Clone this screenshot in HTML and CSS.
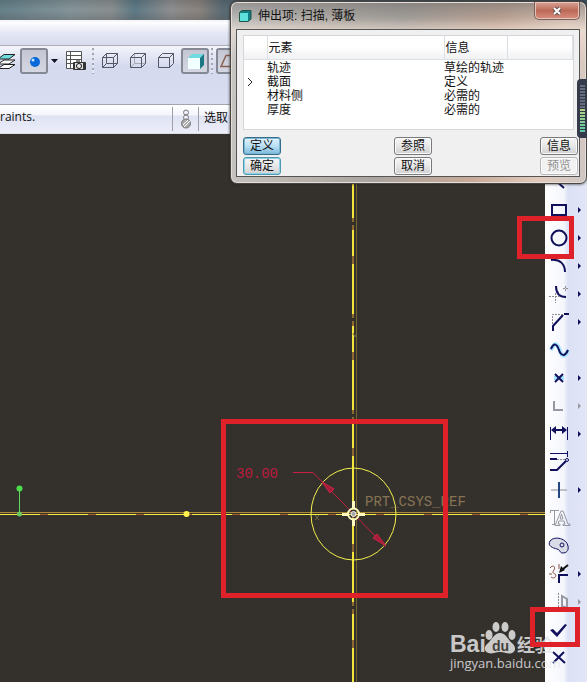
FILE: index.html
```html
<!DOCTYPE html>
<html lang="zh-CN">
<head>
<meta charset="utf-8">
<title>伸出项: 扫描, 薄板</title>
<link rel="stylesheet" href="styles.css">
</head>
<body>
<div class="app">
  <div class="window-glass"></div>
  <div class="menu-strip"></div>
  <div class="toolbar">
    <button class="tool layers" aria-label="图层"><svg width="16" height="16" viewBox="0 0 16 16"><g stroke="#222" fill="#fff"><path d="M-2 15.500L4 11.500H15L9 15.500Z"/><path d="M-2 11L4 7H15L9 11Z"/><path d="M-2 6L4 1.500H15L9 6Z" fill="#6fdde0"/></g></svg></button>
    <button class="tool pressed" aria-label="着色"><svg width="24" height="22" viewBox="2 3 24 22"><circle cx="15" cy="15" r="5" fill="#0868d8"/><circle cx="13" cy="13" r="1.500" fill="#bfe5ff"/></svg></button>
    <button class="drop" aria-label="更多"><svg width="8" height="4"><path d="M0 0H7L3.500 4Z" fill="#112"/></svg></button>
    <button class="tool snapshot" aria-label="视图管理器"><svg width="22" height="22"><path d="M1.500 1.500H16.500V18.500H1.500ZM5.500 2V18M2 5.500H16M2 9.500H16M2 13.500H16" fill="#fff" stroke="#555"/><rect x="8" y="12" width="13" height="8" rx="1" fill="#333"/><rect x="10" y="13" width="8" height="6" fill="#ddd"/><circle cx="14" cy="16" r="2.500" fill="#eee" stroke="#111"/><path d="M11 11h4" stroke="#111"/></svg></button>
    <span class="grip"></span>
    <button class="tool wire" aria-label="线框"><svg width="18" height="18"><path d="M1.500 5.500H12.500V15.500H1.500ZM1.500 5.500L5.500 1.500H16.500L12.500 5.500M16.500 1.500V11.500L12.500 15.500M5.500 1.500V11.500H16.500M5.500 11.500L1.500 15.500" fill="none" stroke="#555866"/></svg></button>
    <button class="tool wire" aria-label="隐藏线"><svg width="18" height="18"><path d="M5.500 1.500V11.500H16.500M5.500 11.500L1.500 15.500" fill="none" stroke="#a6a8b2"/><path d="M1.500 5.500H12.500V15.500H1.500ZM1.500 5.500L5.500 1.500H16.500L12.500 5.500M16.500 1.500V11.500L12.500 15.500" fill="none" stroke="#555866"/></svg></button>
    <button class="tool wire" aria-label="无隐藏线"><svg width="18" height="18"><path d="M1.500 5.500H12.500V15.500H1.500ZM1.500 5.500L5.500 1.500H16.500L12.500 5.500M16.500 1.500V11.500L12.500 15.500" fill="none" stroke="#555866"/></svg></button>
    <button class="tool pressed" aria-label="实体"><svg width="24" height="22" viewBox="1 2 24 22"><path d="M6 10L10 6H22L18 10Z" fill="#6fdbe0"/><path d="M18 10L22 6V17L18 21Z" fill="#1b7782"/><path d="M6 10H18V21H6Z" fill="#f2ffff"/></svg></button>
    <span class="grip"></span>
    <button class="tool pressed" aria-label="基准平面"><svg width="24" height="22" viewBox="2 2 24 22"><path d="M5 18.500L10 7.500H22L17 18.500Z" fill="none" stroke="#8b5f50" stroke-width="1.500"/></svg></button>
  </div>
  <div class="message-bar">
    <span class="message">raints.</span>
    <span class="signal"><svg width="12" height="20"><g stroke="#777" fill="#eef"><circle cx="6" cy="3.500" r="2.500"/><circle cx="6" cy="8.500" r="2.500"/><circle cx="6" cy="14.500" r="4.500" fill="#aaa"/></g><path d="M3 16l5-5M4 18l6-6" stroke="#fff"/></svg></span>
    <span class="pick">选取</span>
  </div>
  <main class="workspace">
    <svg class="canvas" role="img" aria-label="草绘">
      <g fill="none">
        <path d="M356.500 0V900" stroke="#756330"/>
        <path d="M353 0V900" stroke="#8f6a30" stroke-width="2"/>
        <path d="M353 0V900" stroke="#f4e53d" stroke-width="2" stroke-dasharray="26 8 50 12"/>
        <path d="M353 0V900" stroke="#34312d" stroke-width="2" stroke-dasharray="3 93" stroke-dashoffset="-88"/>
        <path d="M0 378.500H1600" stroke="#ad8b35"/>
        <path d="M0 380.500H1600" stroke="#f4ef45"/>
        <path d="M0 380.500H1600" stroke="#a95f2d" stroke-dasharray="8 40" stroke-dashoffset="-40"/>
        <ellipse cx="353.500" cy="380" rx="42.500" ry="46" stroke="#f2ef4e"/>
        <path d="M293 338.500H313L385 412" stroke="#c81f45"/>
      </g>
      <path d="M322 348L334 355L330 359ZM386 412L373 404L377 400Z" fill="#a51d3a" stroke="#d02346"/>
      <g fill="none" stroke="#fffbc1" stroke-width="3"><path d="M342 380.500H348M359 380.500H365M353.500 367V374M353.500 386V392"/><circle cx="353.500" cy="380" r="5.500" stroke-width="2"/></g>
      <circle cx="353.500" cy="380" r="2.500" fill="#a5a5a5" stroke="#eee"/>
      <path d="M315 386l4-5M315 381l4 5M353 199l2 4 2-4" stroke="#756b42" fill="none"/>
      <path d="M19.500 354V380" stroke="#62d95f"/><circle cx="19.500" cy="354.500" r="3" fill="#4bdd4c"/><circle cx="19.500" cy="380" r="2.500" fill="#69c961"/><circle cx="186.500" cy="380" r="3" fill="#fff24c"/>
      <text class="dim" x="236" y="344">30.00</text>
      <text class="csys" x="365" y="372">PRT_CSYS_REF</text>
    </svg>
    <nav class="sketch-tools" aria-label="草绘工具">
      <div class="row"><button aria-label="直线"><svg width="24" height="24"><path d="M7 9L17 18"/></svg></button></div>
      <div class="row"><button aria-label="矩形"><svg width="24" height="24"><path d="M5 7H19V17H5Z"/></svg></button><button class="more" aria-label="更多矩形"></button></div>
      <div class="row"><button aria-label="圆"><svg width="24" height="24"><circle cx="12" cy="12" r="7.500"/></svg></button><button class="more" aria-label="更多圆"></button></div>
      <div class="row"><button aria-label="弧"><svg width="24" height="24"><path d="M4 6C13 5 18 10 18 18"/></svg></button><button class="more" aria-label="更多弧"></button></div>
      <div class="row"><button aria-label="圆角"><svg width="24" height="24"><path d="M9 4C9 11 12 15 19 15"/><path class="aux" d="M2 14.500H14M8.500 11V21M16 6.500H22M18.500 4V9"/></svg></button><button class="more" aria-label="更多圆角"></button></div>
      <div class="row"><button aria-label="倒角"><svg width="24" height="24"><path d="M6 21V16L16 5M17 4H22"/><path class="aux" d="M5.500 14V4.500H17"/></svg></button><button class="more" aria-label="更多倒角"></button></div>
      <div class="row"><button aria-label="样条"><svg width="24" height="24"><path class="glow" d="M4 12C8 2 11 7 13 13S18 20 21 12"/><path d="M4 11C7 4 10 6 12 12S18 19 21 12"/></svg></button></div>
      <div class="row"><button aria-label="点"><svg width="24" height="24"><path class="glow" d="M7 12H17"/><path d="M8 8L16 16M16 8L8 16"/></svg></button><button class="more" aria-label="更多点"></button></div>
      <div class="row off"><button aria-label="使用边"><svg width="24" height="24"><path d="M7 7V16H16"/></svg></button><button class="more" aria-label="更多边"></button></div>
      <div class="row"><button aria-label="尺寸"><svg width="24" height="24"><path class="thin" d="M3.500 5V18M20.500 5V18"/><path d="M5 8H19"/><path class="solid" d="M4 8L9 4V12ZM20 8L15 4V12Z"/></svg></button><button class="more" aria-label="更多尺寸"></button></div>
      <div class="row"><button aria-label="修改"><svg width="24" height="24"><path class="thin" d="M3 3.500H20M20.500 1V7"/><path d="M3 9H10M3 20H10L19 11"/><path class="aux" d="M10 9.500H18"/><circle class="thin" cx="20" cy="10" r="1.500"/></svg></button></div>
      <div class="row"><button aria-label="约束"><svg width="24" height="24"><path class="aux line" d="M4 12H20"/><path class="steel" d="M12 4V20"/></svg></button><button class="more" aria-label="更多约束"></button></div>
      <div class="row off"><button aria-label="文本"><svg width="24" height="24"><path class="thin" d="M3 4.500H12M3.500 4V7M7.500 5V18M5 18.500H8M8 19.500L14 5H16L21 18H23V19.500H16V18H18L17 15H12L11 18H13V19.500H8M13 13H16L14.500 8Z"/></svg></button></div>
      <div class="row"><button aria-label="调色板"><svg width="24" height="24"><path class="palette" d="M3 7C8 1 20 5 21 12C22 17 19 19 16 19C12 19 14 16 10 15C6 14 0 12 3 7Z"/><circle class="thin" cx="15" cy="11" r="2"/></svg></button></div>
      <div class="row"><button aria-label="修剪"><svg width="24" height="24"><path d="M12 21V13H21"/><path class="black" d="M16 7L21 3"/><path class="ink" d="M12 11L14 4L18 8Z"/><path class="brown" d="M3 6C6 2 9 5 7 8S6 11 8 12S8 18 4 15M12 2V7M2 12H5"/></svg></button><button class="more" aria-label="更多修剪"></button></div>
      <div class="row off"><button aria-label="镜像"><svg width="24" height="24"><path class="aux" d="M11.500 3V21"/><path d="M15 6L20 9V18L15 16Z"/></svg></button><button class="more" aria-label="更多镜像"></button></div>
      <div class="row"><button aria-label="完成"><svg width="24" height="24"><path class="solid" d="M3 12L6 11L10 15L18 6L20 7L10 19Z"/></svg></button></div>
      <div class="row"><button aria-label="退出"><svg width="24" height="24"><path d="M6 6L18 17M17 6L6 17"/></svg></button></div>
    </nav>
    <svg class="watermark" width="132" height="60">
      <g fill="#e6e6e6" fill-opacity=".85"><text class="wm-brand" x="4" y="35">Bai</text><path d="M54 16C60 16 62 23 67 27C72 33 67 38 60 36Q54 34 48 36C40 38 36 32 41 27C46 23 48 16 54 16Z"/><ellipse cx="43" cy="18" rx="3.500" ry="5"/><ellipse cx="50" cy="10" rx="3.500" ry="5"/><ellipse cx="59" cy="10" rx="3.500" ry="5"/><ellipse cx="66" cy="18" rx="3.500" ry="5"/><text class="wm-cn" x="71" y="35">经验</text><text class="wm-url" x="4" y="51">jingyan.baidu.com</text></g><text class="wm-du" x="46" y="34">du</text>
    </svg>
    <div class="mark mark-sketch"></div>
    <div class="mark mark-circle"></div>
    <div class="mark mark-done"></div>
  </main>
</div>

<section class="dialog" role="dialog" aria-labelledby="dialog-title">
  <header class="dialog-head">
    <svg width="14" height="14"><path d="M1.500 3.500L4 1.500H13V10L10 12.500H1.500Z" fill="#137d86" stroke="#254"/><path d="M2 4H10V12H2Z" fill="#5ee0dc"/></svg>
    <h1 id="dialog-title">伸出项: 扫描, 薄板</h1>
    <button class="close" aria-label="关闭"><svg width="12" height="10"><path d="M3 2L9 8M9 2L3 8" stroke="#685050" stroke-width="4"/><path d="M3 2L9 8M9 2L3 8" stroke="#fff" stroke-width="2"/></svg></button>
  </header>
  <div class="dialog-body">
    <div class="list">
      <table>
        <colgroup><col class="c-mark"><col class="c-item"><col class="c-info"><col></colgroup>
        <thead><tr><th></th><th>元素</th><th>信息</th><th></th></tr></thead>
        <tbody>
          <tr><td></td><td>轨迹</td><td>草绘的轨迹</td><td></td></tr>
          <tr><td><svg width="6" height="10"><path d="M1 1L5 5L1 9" fill="none" stroke="#222"/></svg></td><td>截面</td><td>定义</td><td></td></tr>
          <tr><td></td><td>材料侧</td><td>必需的</td><td></td></tr>
          <tr><td></td><td>厚度</td><td>必需的</td><td></td></tr>
        </tbody>
      </table>
    </div>
    <div class="actions">
      <button class="btn hot">定义</button><button class="btn">参照</button><button class="btn">信息</button>
      <button class="btn default">确定</button><button class="btn">取消</button><button class="btn" disabled>预览</button>
    </div>
  </div>
</section>
<div class="gauge"></div>
</body>
</html>
```
FILE: styles.css
```css
* { box-sizing: border-box; }
body {
  margin: 0;
  font: 12px/14px "Liberation Sans", "Noto Sans CJK SC", sans-serif;
  color: #111;
  overflow: hidden;
}
button { margin: 0; padding: 0; border: 0; background: none; font: inherit; color: inherit; }
svg { display: block; flex: none; }

.app { display: flex; flex-direction: column; min-height: 100vh; }
.window-glass {
  height: 22px;
  border-bottom: 2px solid #f6f6fa;
  background:
    linear-gradient(#0002, #0000 50%, #5555),
    linear-gradient(90deg, #66808a, #84959a 12%, #8a8f90 19%, #5d7a86 23%, #8d8f90 29%, #8a837e 34%, #5a6c75 38%, #475c68);
}
.menu-strip { height: 24px; background: linear-gradient(#fff, #e5e7f5 45%, #d8dced); border-bottom: 1px solid #aeb0b9; }
.toolbar {
  display: flex;
  height: 59px;
  padding-top: 2px;
  background: linear-gradient(#f4f5fb, #d4d9ed 35%, #d9def2);
  border-bottom: 1px solid #a2a5af;
}
.tool { display: grid; place-items: center; flex: none; width: 28px; height: 26px; }
.layers { width: 20px; justify-items: start; }
.pressed { border: 2px solid #858995; border-radius: 3px; background: linear-gradient(#c4c7d3, #d4d7e2); }
.drop { display: grid; place-items: center; width: 14px; height: 26px; }
.grip { flex: none; width: 2px; height: 26px; margin: 0 3px 0 2px; background: repeating-linear-gradient(#a4a6b5 0 2px, #e3e5f0 2px 5px); }
.wire { padding-right: 2px; }

.message-bar { display: flex; height: 29px; background: linear-gradient(#fff, #f4f5fc 35%, #dfe2f2 40%, #eceefa); border-bottom: 1px solid #dadce7; }
.message { width: 172px; font: 12px/24px "Open Sans", sans-serif; }
.signal { display: grid; place-items: center; width: 27px; margin: 2px 0; border: solid #9da0aa; border-width: 0 1px; }
.pick { padding-left: 5px; line-height: 26px; }

.workspace { position: relative; display: flex; flex: 1; background: #34312d; overflow: hidden; }
.canvas { flex: 1; min-width: 0; align-self: stretch; height: auto; }
.dim, .csys { font: 14px "Liberation Mono", monospace; }
.dim { fill: #bb1b3c; }
.csys { fill: #877454; }
.sketch-tools { flex: none; width: 42px; padding: 34px 0 10px 2px; background: linear-gradient(90deg, #fff, #f4f6fd 45%, #dce1f5 55%, #e2e6f7); }
.row { display: flex; align-items: center; height: 28px; color: #10105c; }
.off { color: #9898a2; }
.row svg { fill: none; stroke: currentColor; stroke-width: 2; }
.row svg .thin { stroke-width: 1; }
.row svg .aux { stroke: #8c8c90; stroke-width: 1; stroke-dasharray: 2 1; }
.row svg .line { stroke-dasharray: none; }
.row svg .glow { stroke: #a2e4ff; stroke-width: 4; }
.row svg .solid { fill: currentColor; stroke: none; }
.row svg .steel { stroke: #23477e; }
.row svg .palette { fill: #d9dce6; stroke-width: 1; }
.row svg .black { stroke: #111; }
.row svg .ink { fill: #111; stroke: none; }
.row svg .brown { stroke: #8c5144; stroke-width: 1; }
.more { width: 0; height: 0; margin-left: 7px; border: solid transparent; border-width: 3px 0 3px 3px; border-left-color: currentColor; }

.mark { position: absolute; border: 5px solid #df2229; }
.mark-sketch { left: 221px; top: 285px; width: 227px; height: 179px; }
.mark-circle { right: 13px; top: 82px; width: 57px; height: 43px; }
.mark-done { right: 7px; top: 473px; width: 50px; height: 40px; }
.watermark { position: absolute; right: 9px; top: 483px; }
.wm-brand { font: bold 23px "Liberation Sans", sans-serif; }
.wm-cn { font: bold 18px "Noto Sans CJK SC", sans-serif; }
.wm-url { font: 13px "Open Sans", sans-serif; }
.wm-du { font: bold 14px "Liberation Sans", sans-serif; fill: #45423d; }

.dialog {
  position: absolute;
  top: 1px;
  right: 0;
  width: 357px;
  padding: 0 6px 6px 5px;
  border: 1px solid #4a4540;
  border-radius: 7px;
  background: linear-gradient(#66666688, #77777733 16px, #f6e6da88 28px, #0000 60px), linear-gradient(100deg, #c8c8c6, #bab3ad 25%, #aaa5a0 45%, #c8aa98 70%, #e2cbbd 88%, #cfc7c3);
  box-shadow: inset 0 0 0 1px #e4deda, 0 0 3px #222;
}
.dialog-head { display: flex; align-items: center; gap: 6px; height: 27px; padding-left: 2px; }
.dialog h1 { flex: 1; margin: 0; font-size: 12px; font-weight: normal; }
.close { display: grid; place-items: center; align-self: start; width: 46px; height: 18px; border: 1px solid #77605a; border-top: 0; border-radius: 0 0 5px 5px; background: linear-gradient(#d8a497, #bd6957 50%, #d98f80); box-shadow: inset 0 0 0 1px #e9c4b9; }
.dialog-body { padding: 5px 1px 1px 6px; border: 1px solid #555; background: #f0f0f0; }
.list { height: 95px; margin-right: 4px; background: #fff; border: 1px solid #d4d7db; }
table { width: 100%; border-collapse: collapse; table-layout: fixed; }
.c-mark { width: 23px; }
.c-item { width: 177px; }
.c-info { width: 63px; }
th { height: 23px; padding: 2px 0 0 1px; font-weight: normal; text-align: left; background: linear-gradient(#fff 45%, #f0f1f3); border: solid #dedfe2; border-width: 0 1px 1px 0; }
td { height: 14px; padding: 0; line-height: 14px; white-space: nowrap; }
td svg { margin-left: 3px; }
tbody::before { content: ""; display: block; height: 1px; }
.actions { display: grid; grid-template-columns: 151px 1fr 38px; gap: 2px 0; margin-top: 7px; }
.btn { width: 38px; height: 18px; line-height: 14px; border: 1px solid #77797d; border-radius: 3px; background: linear-gradient(#f6f6f6, #e7e7e7 50%, #d0d0d0); box-shadow: inset 0 0 0 1px #fafafa; }
.hot { border-color: #356d8c; background: linear-gradient(#e2f3fc, #badff4 50%, #79b9dc); box-shadow: inset 0 0 0 1px #7db6d0; }
.default { border-color: #5099b1; box-shadow: inset 0 0 0 1px #8bd2e8; }
.btn:disabled { color: #929292; border-color: #b8b8b8; background: #f2f2f2; }

.gauge {
  position: absolute;
  right: 0;
  top: 79px;
  width: 10px;
  height: 59px;
  border: solid #353a4b;
  border-width: 5px 2px 5px 3px;
  border-radius: 4px 0 0 4px;
  background: repeating-linear-gradient(#353a4b 0 1px, #0000 1px 3px), linear-gradient(#656c7e 50%, #b8d282 50%, #54c9a7);
}
```
